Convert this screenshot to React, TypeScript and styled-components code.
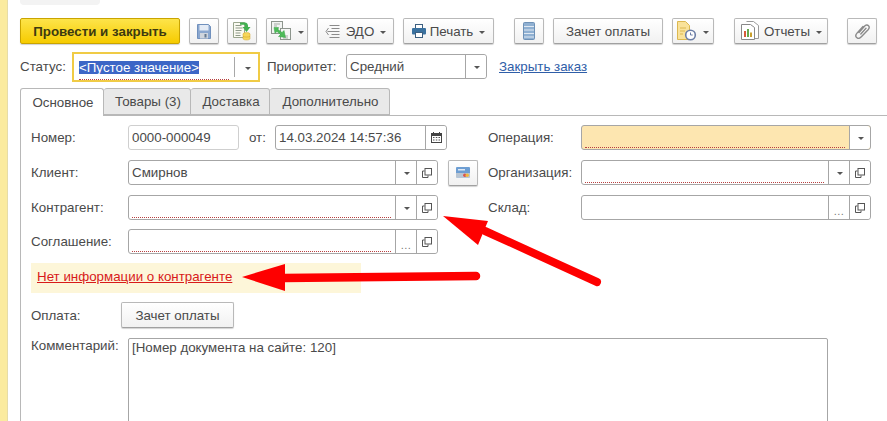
import React from "react";
import styled, { createGlobalStyle } from "styled-components";

const Global = createGlobalStyle`
  html, body { margin: 0; padding: 0; background: #fff; }
  body { font-family: "Liberation Sans", Arial, sans-serif; font-size: 13.33px; color: #4a4a4a; }
  #root { width: 887px; height: 421px; overflow: hidden; }
`;

const Page = styled.div`
  position: relative;
  display: flex;
  width: 887px;
  height: 421px;
  overflow: hidden;
`;
const Strip = styled.div`
  width: 7px;
  flex: none;
  background: #fbeb9f;
  border-right: 1px solid #e6dca8;
`;
const Content = styled.div`
  flex: 1;
  min-width: 0;
  padding-left: 11px;
  display: flex;
  flex-direction: column;
`;
const TopStub = styled.div`
  width: 80px;
  height: 5px;
  flex: none;
  margin-left: 1px;
  background: #f3f3f3;
  border-radius: 0 0 4px 4px;
`;
const Toolbar = styled.div`
  display: flex;
  flex: none;
  margin: 13px 0 0 1px;
  height: 26px;
`;
const Btn = styled.button<{ $w: number; $ml?: number }>`
  width: ${(p) => p.$w}px;
  margin-left: ${(p) => p.$ml ?? 9}px;
  height: 26px;
  box-sizing: border-box;
  padding: 0;
  display: flex;
  align-items: center;
  justify-content: center;
  gap: 4px;
  font: inherit;
  color: #4a4a4a;
  background: linear-gradient(#ffffff, #f1f1f1);
  border: 1px solid #b9b9b9;
  border-bottom-color: #a0a0a0;
  border-radius: 2px;
  box-shadow: 0 1px 1px rgba(0, 0, 0, 0.18);
  white-space: nowrap;
`;
const PrimaryBtn = styled(Btn)`
  font-weight: bold;
  color: #3d3a10;
  background: linear-gradient(#fde44a, #f6cb00);
  border-color: #c9a400;
`;
const Caret = styled.span`
  display: inline-block;
  width: 0;
  height: 0;
  margin-top: 2px;
  margin-left: 2px;
  border-left: 3px solid transparent;
  border-right: 3px solid transparent;
  border-top: 3px solid #555;
`;
const StatusRow = styled.div`
  display: flex;
  flex: none;
  align-items: flex-start;
  margin: 8px 0 0 1px;
  height: 30px;
`;
const Label = styled.span<{ $w: number }>`
  width: ${(p) => p.$w}px;
  flex: none;
  white-space: nowrap;
`;
const StatusLabel = styled(Label)`
  line-height: 30px;
`;
const PriorityLabel = styled(Label)`
  margin-left: 7px;
  line-height: 30px;
`;
const StatusFrame = styled.div`
  width: 188px;
  height: 30px;
  box-sizing: border-box;
  display: flex;
  border: 2px solid #f0cb45;
  background: #fff;
`;
const StatusMain = styled.div`
  flex: 1;
  padding: 7px 5px 0 5px;
`;
const DottedValue = styled.div<{ $h?: number }>`
  height: ${(p) => p.$h ?? 20}px;
  line-height: 20px;
  box-sizing: border-box;
  border-bottom: 1px dotted #b84040;
  white-space: nowrap;
`;
const Selected = styled.span`
  display: inline-block;
  height: 13px;
  line-height: 13px;
  padding: 0;
  background: #3c66c6;
  color: #fff;
  vertical-align: top;
`;
const StatusCell = styled.div`
  width: 23px;
  margin: 3px 0;
  border-left: 1px solid #a8a8a8;
  display: flex;
  align-items: center;
  justify-content: center;
`;
const Field = styled.div<{ $w: number; $bg?: string; $soft?: boolean }>`
  width: ${(p) => p.$w}px;
  height: 25px;
  flex: none;
  box-sizing: border-box;
  display: flex;
  background: ${(p) => p.$bg ?? "#fff"};
  border: 1px solid ${(p) => (p.$soft ? "#cfcfcf" : "#a6a6a6")};
  border-radius: 3px;
`;
const FieldMain = styled.div`
  flex: 1;
  min-width: 0;
  padding: 1px 4px 0 3px;
  line-height: 22px;
  white-space: nowrap;
`;
const FieldCell = styled.div<{ $w?: number }>`
  width: ${(p) => p.$w ?? 21}px;
  flex: none;
  box-sizing: border-box;
  border-left: 1px solid #a6a6a6;
  background: #fff;
  display: flex;
  align-items: center;
  justify-content: center;
  border-radius: 0 3px 3px 0;
`;
const Dots = styled.span`
  font-size: 11px;
  line-height: 11px;
  margin-top: 7px;
  letter-spacing: 0.5px;
  color: #777;
`;
const PriorityField = styled(Field)`
  margin-top: 2px;
`;
const LinkText = styled.a`
  margin-left: 12px;
  line-height: 30px;
  color: #2f5ea8;
  text-decoration: underline;
`;
const Tabs = styled.div`
  display: flex;
  flex: none;
  margin: 6px 0 0 1px;
  height: 27px;
`;
const Tab = styled.div<{ $w: number; $active?: boolean }>`
  width: ${(p) => p.$w}px;
  box-sizing: border-box;
  height: ${(p) => (p.$active ? 28 : 27)}px;
  padding-left: 2px;
  display: flex;
  align-items: center;
  justify-content: center;
  background: ${(p) => (p.$active ? "#fff" : "#e9e9e9")};
  border: 1px solid #b8b8b8;
  border-left-width: ${(p) => (p.$active ? 1 : 0)}px;
  border-bottom: ${(p) => (p.$active ? "none" : "1px solid #b8b8b8")};
  border-radius: 3px 3px 0 0;
  position: relative;
  z-index: ${(p) => (p.$active ? 1 : 0)};
`;
const Panel = styled.div`
  flex: none;
  margin-left: 1px;
  border-top: 1px solid #b8b8b8;
  border-left: 1px solid #b8b8b8;
  padding: 9px 0 0 10px;
  display: flex;
  flex-direction: column;
`;
const Columns = styled.div`
  display: flex;
  flex: none;
  height: 129px;
`;
const LeftCol = styled.div`
  width: 457px;
  flex: none;
  display: flex;
  flex-direction: column;
`;
const RightCol = styled.div`
  display: flex;
  flex-direction: column;
`;
const FormRow = styled.div<{ $mt?: number }>`
  display: flex;
  flex: none;
  align-items: center;
  height: 25px;
  margin-top: ${(p) => p.$mt ?? 10}px;
`;
const FromLabel = styled(Label)`
  margin-left: 10px;
`;
const CardBtn = styled(Btn)`
  margin-left: 10px;
`;
const Warning = styled.div`
  width: 330px;
  height: 30px;
  flex: none;
  box-sizing: border-box;
  margin-top: 9px;
  padding-left: 6px;
  line-height: 28px;
  background: #fdf6d9;
`;
const WarnLink = styled.a`
  color: #d81a1a;
  text-decoration: underline;
`;
const PayRow = styled.div`
  display: flex;
  flex: none;
  align-items: center;
  height: 26px;
  margin-top: 9px;
`;
const PayLabel = styled(Label)``;
const PayBtn = styled(Btn)`
  margin-left: 0;
`;
const CommentRow = styled.div`
  display: flex;
  flex: none;
  margin-top: 10px;
`;
const CommentLabel = styled(Label)``;
const CommentBox = styled.div`
  width: 700px;
  height: 120px;
  box-sizing: border-box;
  flex: none;
  padding: 1px 3px;
  border: 1px solid #a6a6a6;
  border-radius: 2px;
`;
const Arrows = styled.svg`
  position: absolute;
  left: 0;
  top: 0;
  pointer-events: none;
`;

const Open = () => (
  <svg width="10" height="10" viewBox="0 0 10 10" fill="none" stroke="#555" strokeWidth="1">
    <path d="M2.500 3H.5v6.500H6V7.500" />
    <rect x="3" y=".5" width="6.500" height="6.500" fill="#fff" />
  </svg>
);
const Down = () => <Caret />;

const SaveIcon = () => (
  <svg width="14" height="15" viewBox="0 0 14 15">
    <path d="M.5.5h11l2 2v12H.5z" fill="#8aa7cf" stroke="#7090bd" />
    <rect x="2.500" y="1" width="9" height="5.500" fill="#e4ebf5" />
    <rect x="3" y="9" width="8" height="5.500" fill="#cfd5dd" />
    <rect x="7.500" y="10" width="2" height="3.500" fill="#65798f" />
  </svg>
);
const PostIcon = () => (
  <svg width="20" height="20" viewBox="0 0 20 20">
    <path d="M1.500 1.500h11v15h-11z" fill="#fbfbf2" stroke="#9aa68e" />
    <path d="M3.500 4.500h6M3.500 7h7M3.500 9.500h6M3.500 12h5M3.500 14.500h5" stroke="#8f9a8a" />
    <path d="M8 1.500h5c1.500 0 2.800 1 3 3v1.500h2.500L14.500 11 10.500 6H13V5c0-.8-.5-1.200-1.500-1.200H8z" fill="#41b050" />
    <ellipse cx="14.500" cy="13" rx="3.500" ry="1.400" fill="#f6d65a" stroke="#d1a72c" strokeWidth=".5" />
    <path d="M11 13v4.600c0 .9 1.500 1.400 3.500 1.400s3.500-.5 3.500-1.400V13" fill="#f6d65a" stroke="#d1a72c" strokeWidth=".5" />
    <path d="M11 15.300c1 1 6 1 7 0" stroke="#d1a72c" strokeWidth=".6" fill="none" />
  </svg>
);
const ExchangeIcon = () => (
  <svg width="21" height="20" viewBox="0 0 21 20">
    <rect x=".5" y=".5" width="11" height="12" fill="#f2f4f2" stroke="#8d958d" />
    <path d="M3 3h6M3 5h3" stroke="#a5aca5" />
    <rect x="9.500" y="7.500" width="10" height="11" fill="#f5f6f5" stroke="#8d958d" />
    <path d="M12 15h5M12 17h5" stroke="#a5aca5" />
    <path d="M3 6.500h4.500L7 8.500l4 3 2-2 1.500 7-7-1 2-2-3.500-3-2 1.800z" fill="#4dbb58" stroke="#36a045" strokeWidth=".5" />
  </svg>
);
const EdoIcon = () => (
  <svg width="17" height="17" viewBox="0 0 17 17" fill="none" stroke="#8b8b8b">
    <path d="M4.500 2.500h10M6.500 5.500h8M2.500 8.500h12M6.500 11.500h8M4.500 14.500h10" />
    <path d="M3.500 5 1 8.500l2.500 3.500" />
  </svg>
);
const PrintIcon = () => (
  <svg width="14" height="14" viewBox="0 0 14 14">
    <rect x="3.500" y=".5" width="7" height="4" fill="#fff" stroke="#3c5f80" />
    <rect x="0" y="4" width="14" height="6.500" rx="1" fill="#3a719f" />
    <rect x="3.500" y="8.500" width="7" height="5" fill="#fff" stroke="#3c5f80" />
  </svg>
);
const ListIcon = () => (
  <svg width="12" height="18" viewBox="0 0 12 18">
    <rect x=".5" y=".5" width="11" height="17" rx="1" fill="#8fb0d2" stroke="#6e91b6" />
    <path d="M1 4.500h10M1 8h10M1 11.500h10M1 15h10" stroke="#dfe8f2" />
  </svg>
);
const ClockDocIcon = () => (
  <svg width="20" height="20" viewBox="0 0 20 20">
    <path d="M.5.5h8l4 4v14H.5z" fill="#f9e29a" stroke="#dcb850" />
    <path d="M3 7h6M3 10h5M3 13h3" stroke="#dcb850" />
    <circle cx="13.500" cy="14" r="4.800" fill="#fff" stroke="#6c7ea6" strokeWidth="1.600" />
    <path d="M13.500 11.500V14h2.200" stroke="#6c7ea6" fill="none" />
  </svg>
);
const ReportIcon = () => (
  <svg width="20" height="20" viewBox="0 0 20 20">
    <path d="M6.500.5h7l5 4v13h-4" fill="#fff" stroke="#999" />
    <path d="M1.500 3.500h9l4 3v12h-13z" fill="#fff" stroke="#888" />
    <rect x="4" y="10" width="2" height="6" fill="#d65b3a" />
    <rect x="7" y="8" width="2" height="8" fill="#66a84b" />
    <rect x="10" y="11.500" width="2" height="4.500" fill="#c9a02e" />
  </svg>
);
const ClipIcon = () => (
  <svg width="15" height="16" viewBox="0 0 15 16" fill="none" stroke="#8a8a8a" strokeWidth="1.400" strokeLinecap="round">
    <path d="M4 9.500 9.500 3.200c1.200-1.400 3-1.500 4-.5s.8 2.600-.4 4L6.600 13.600c-1.800 1.900-3.900 2-5 1s-.9-3 .6-4.700L8 3.500" />
    <path d="M5.800 11 11 5.200" />
  </svg>
);
const CalendarIcon = () => (
  <svg width="11" height="11" viewBox="0 0 11 11">
    <rect x=".5" y="1.500" width="10" height="9" fill="#fff" stroke="#444" />
    <rect x="0" y="1" width="11" height="3" fill="#444" />
    <path d="M2.500 0v2M8.500 0v2" stroke="#444" />
    <path d="M2 5.500h1.500M4.800 5.500h1.500M7.500 5.500H9M2 8h1.500M4.800 8h1.500M7.500 8H9" stroke="#555" />
  </svg>
);
const CardIcon = () => (
  <svg width="14" height="11" viewBox="0 0 14 11">
    <rect x="0" y="0" width="14" height="10.500" rx="1" fill="#6d9ed3" />
    <rect x="0" y="6" width="14" height="4.500" fill="#b9c5d2" />
    <rect x="2" y="2" width="7" height="1.500" fill="#dfe9f5" />
    <circle cx="8.800" cy="8.200" r="1.700" fill="#d9534f" />
    <circle cx="11.200" cy="8.200" r="1.700" fill="#efb93f" />
  </svg>
);

export default function App() {
  return (
    <Page>
      <Global />
      <Strip />
      <Content>
        <TopStub />
        <Toolbar>
          <PrimaryBtn $w={160} $ml={0}>Провести и закрыть</PrimaryBtn>
          <Btn $w={30}><SaveIcon /></Btn>
          <Btn $w={30} $ml={8}><PostIcon /></Btn>
          <Btn $w={42}><ExchangeIcon /><Down /></Btn>
          <Btn $w={77}><EdoIcon /> ЭДО <Down /></Btn>
          <Btn $w={91}><PrintIcon /> Печать <Down /></Btn>
          <Btn $w={30} $ml={20}><ListIcon /></Btn>
          <Btn $w={110}>Зачет оплаты</Btn>
          <Btn $w={42}><ClockDocIcon /><Down /></Btn>
          <Btn $w={94} $ml={20}><ReportIcon /> Отчеты <Down /></Btn>
          <Btn $w={30} $ml={19}><ClipIcon /></Btn>
        </Toolbar>
        <StatusRow>
          <StatusLabel $w={52}>Статус:</StatusLabel>
          <StatusFrame>
            <StatusMain>
              <DottedValue $h={19}><Selected>&lt;Пустое значение&gt;</Selected></DottedValue>
            </StatusMain>
            <StatusCell><Down /></StatusCell>
          </StatusFrame>
          <PriorityLabel $w={79}>Приоритет:</PriorityLabel>
          <PriorityField $w={141}>
            <FieldMain>Средний</FieldMain>
            <FieldCell><Down /></FieldCell>
          </PriorityField>
          <LinkText>Закрыть заказ</LinkText>
        </StatusRow>
        <Tabs>
          <Tab $w={84} $active>Основное</Tab>
          <Tab $w={87}>Товары (3)</Tab>
          <Tab $w={79}>Доставка</Tab>
          <Tab $w={120}>Дополнительно</Tab>
        </Tabs>
        <Panel>
          <Columns>
            <LeftCol>
              <FormRow $mt={0}>
                <Label $w={97}>Номер:</Label>
                <Field $w={111} $soft><FieldMain>0000-000049</FieldMain></Field>
                <FromLabel $w={26}>от:</FromLabel>
                <Field $w={172}>
                  <FieldMain>14.03.2024 14:57:36</FieldMain>
                  <FieldCell><CalendarIcon /></FieldCell>
                </Field>
              </FormRow>
              <FormRow>
                <Label $w={97}>Клиент:</Label>
                <Field $w={310}>
                  <FieldMain>Смирнов</FieldMain>
                  <FieldCell><Down /></FieldCell>
                  <FieldCell><Open /></FieldCell>
                </Field>
                <CardBtn $w={30}><CardIcon /></CardBtn>
              </FormRow>
              <FormRow>
                <Label $w={97}>Контрагент:</Label>
                <Field $w={310}>
                  <FieldMain><DottedValue $h={21} /></FieldMain>
                  <FieldCell><Down /></FieldCell>
                  <FieldCell><Open /></FieldCell>
                </Field>
              </FormRow>
              <FormRow $mt={9}>
                <Label $w={97}>Соглашение:</Label>
                <Field $w={310}>
                  <FieldMain><DottedValue $h={21} /></FieldMain>
                  <FieldCell><Dots>...</Dots></FieldCell>
                  <FieldCell><Open /></FieldCell>
                </Field>
              </FormRow>
            </LeftCol>
            <RightCol>
              <FormRow $mt={0}>
                <Label $w={93}>Операция:</Label>
                <Field $w={290} $bg="#fde6b0">
                  <FieldMain><DottedValue $h={21} /></FieldMain>
                  <FieldCell><Down /></FieldCell>
                </Field>
              </FormRow>
              <FormRow>
                <Label $w={93}>Организация:</Label>
                <Field $w={290}>
                  <FieldMain><DottedValue $h={21} /></FieldMain>
                  <FieldCell><Down /></FieldCell>
                  <FieldCell><Open /></FieldCell>
                </Field>
              </FormRow>
              <FormRow>
                <Label $w={93}>Склад:</Label>
                <Field $w={290}>
                  <FieldMain />
                  <FieldCell><Dots>...</Dots></FieldCell>
                  <FieldCell><Open /></FieldCell>
                </Field>
              </FormRow>
            </RightCol>
          </Columns>
          <Warning><WarnLink>Нет информации о контрагенте</WarnLink></Warning>
          <PayRow>
            <PayLabel $w={90}>Оплата:</PayLabel>
            <PayBtn $w={113}>Зачет оплаты</PayBtn>
          </PayRow>
          <CommentRow>
            <CommentLabel $w={97}>Комментарий:</CommentLabel>
            <CommentBox>[Номер документа на сайте: 120]</CommentBox>
          </CommentRow>
        </Panel>
      </Content>
      <Arrows width="887" height="421" viewBox="0 0 887 421">
        <path d="M485 231 597 282" stroke="#fe0000" strokeWidth="8" strokeLinecap="round" />
        <path d="M443 216 488 221 478 245z" fill="#fe0000" />
        <path d="M284 278 476 276" stroke="#fe0000" strokeWidth="8.500" strokeLinecap="round" />
        <path d="M242 277 285 264 285 291z" fill="#fe0000" />
      </Arrows>
    </Page>
  );
}
